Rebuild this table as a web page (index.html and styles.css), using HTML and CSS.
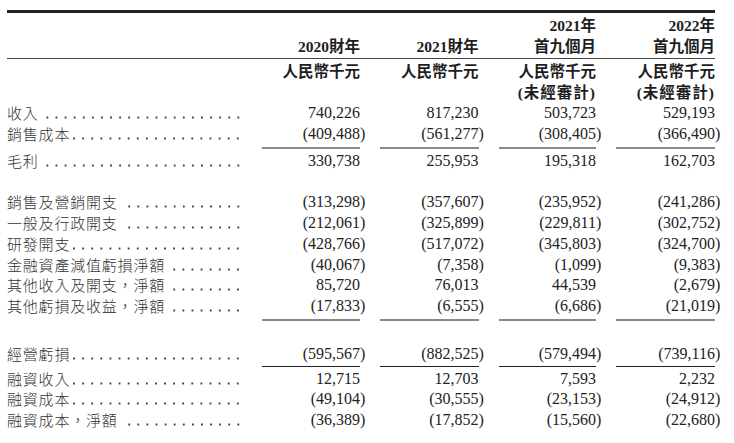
FILE: index.html
```html
<!DOCTYPE html>
<html lang="zh-Hant">
<head>
<meta charset="utf-8">
<title>財務資料</title>
<link rel="stylesheet" href="styles.css">
</head>
<body>
<div class="sheet">
  <div class="hdr hdr1">
    <div></div>
    <div class="hc">2020財年</div>
    <div class="hc">2021財年</div>
    <div class="hc">2021年<br>首九個月</div>
    <div class="hc">2022年<br>首九個月</div>
  </div>
  <div class="hdr hdr2">
    <div></div>
    <div class="hc">人民幣千元</div>
    <div class="hc">人民幣千元</div>
    <div class="hc">人民幣千元<br><span class="pr">(未經審計)</span></div>
    <div class="hc">人民幣千元<br><span class="pr">(未經審計)</span></div>
  </div>

  <div class="row">
    <div class="lab"><span class="t">收入</span><span class="d"></span></div>
    <div class="c"><span class="v">740,226</span></div>
    <div class="c"><span class="v">817,230</span></div>
    <div class="c"><span class="v">503,723</span></div>
    <div class="c"><span class="v">529,193</span></div>
  </div>
  <div class="row">
    <div class="lab"><span class="t">銷售成本</span><span class="d"></span></div>
    <div class="c u"><span class="v n">(409,488)</span></div>
    <div class="c u"><span class="v n">(561,277)</span></div>
    <div class="c u"><span class="v n">(308,405)</span></div>
    <div class="c u"><span class="v n">(366,490)</span></div>
  </div>
  <div class="row">
    <div class="lab"><span class="t">毛利</span><span class="d"></span></div>
    <div class="c"><span class="v">330,738</span></div>
    <div class="c"><span class="v">255,953</span></div>
    <div class="c"><span class="v">195,318</span></div>
    <div class="c"><span class="v">162,703</span></div>
  </div>
  <div class="gap"></div>
  <div class="row">
    <div class="lab"><span class="t">銷售及營銷開支</span><span class="d"></span></div>
    <div class="c"><span class="v n">(313,298)</span></div>
    <div class="c"><span class="v n">(357,607)</span></div>
    <div class="c"><span class="v n">(235,952)</span></div>
    <div class="c"><span class="v n">(241,286)</span></div>
  </div>
  <div class="row">
    <div class="lab"><span class="t">一般及行政開支</span><span class="d"></span></div>
    <div class="c"><span class="v n">(212,061)</span></div>
    <div class="c"><span class="v n">(325,899)</span></div>
    <div class="c"><span class="v n">(229,811)</span></div>
    <div class="c"><span class="v n">(302,752)</span></div>
  </div>
  <div class="row">
    <div class="lab"><span class="t">研發開支</span><span class="d"></span></div>
    <div class="c"><span class="v n">(428,766)</span></div>
    <div class="c"><span class="v n">(517,072)</span></div>
    <div class="c"><span class="v n">(345,803)</span></div>
    <div class="c"><span class="v n">(324,700)</span></div>
  </div>
  <div class="row">
    <div class="lab"><span class="t">金融資產減值虧損淨額</span><span class="d"></span></div>
    <div class="c"><span class="v n">(40,067)</span></div>
    <div class="c"><span class="v n">(7,358)</span></div>
    <div class="c"><span class="v n">(1,099)</span></div>
    <div class="c"><span class="v n">(9,383)</span></div>
  </div>
  <div class="row">
    <div class="lab"><span class="t">其他收入及開支，淨額</span><span class="d"></span></div>
    <div class="c"><span class="v">85,720</span></div>
    <div class="c"><span class="v">76,013</span></div>
    <div class="c"><span class="v">44,539</span></div>
    <div class="c"><span class="v n">(2,679)</span></div>
  </div>
  <div class="row">
    <div class="lab"><span class="t">其他虧損及收益，淨額</span><span class="d"></span></div>
    <div class="c u"><span class="v n">(17,833)</span></div>
    <div class="c u"><span class="v n">(6,555)</span></div>
    <div class="c u"><span class="v n">(6,686)</span></div>
    <div class="c u"><span class="v n">(21,019)</span></div>
  </div>
  <div class="gap"></div>
  <div class="row">
    <div class="lab"><span class="t">經營虧損</span><span class="d"></span></div>
    <div class="c u2"><span class="v n">(595,567)</span></div>
    <div class="c u2"><span class="v n">(882,525)</span></div>
    <div class="c u2"><span class="v n">(579,494)</span></div>
    <div class="c u2"><span class="v n">(739,116)</span></div>
  </div>
  <div class="row">
    <div class="lab"><span class="t">融資收入</span><span class="d"></span></div>
    <div class="c"><span class="v">12,715</span></div>
    <div class="c"><span class="v">12,703</span></div>
    <div class="c"><span class="v">7,593</span></div>
    <div class="c"><span class="v">2,232</span></div>
  </div>
  <div class="row">
    <div class="lab"><span class="t">融資成本</span><span class="d"></span></div>
    <div class="c"><span class="v n">(49,104)</span></div>
    <div class="c"><span class="v n">(30,555)</span></div>
    <div class="c"><span class="v n">(23,153)</span></div>
    <div class="c"><span class="v n">(24,912)</span></div>
  </div>
  <div class="row">
    <div class="lab"><span class="t">融資成本，淨額</span><span class="d"></span></div>
    <div class="c"><span class="v n">(36,389)</span></div>
    <div class="c"><span class="v n">(17,852)</span></div>
    <div class="c"><span class="v n">(15,560)</span></div>
    <div class="c"><span class="v n">(22,680)</span></div>
  </div>
</div>
</body>
</html>
```

FILE: styles.css
```css
html, body {
  margin: 0;
  padding: 0;
  background: #ffffff;
}

body {
  color: #222222;
  font-family: "Liberation Serif", "Noto Sans CJK TC", serif;
}

.sheet {
  margin: 10px 0 0 7px;
  width: 708px;
  border-top: 3px solid #222222;
}

.hdr,
.row {
  display: grid;
  grid-template-columns: 245px 118px 118.5px 117.5px 109px;
}

.hdr {
  font-family: "Liberation Serif", "Noto Sans CJK TC", serif;
  font-weight: 700;
  font-size: 15.5px;
  line-height: 20.5px;
  color: #1e1e1e;
}

.hdr1 {
  padding-top: 3px;
  padding-bottom: 1px;
  border-bottom: 1px solid #444444;
  align-items: end;
}

.hdr2 {
  padding-top: 3px;
  align-items: start;
}

.hc {
  margin: 0 10px;
  text-align: right;
  white-space: nowrap;
}

.hc:last-child {
  margin-right: 0;
}

.pr {
  letter-spacing: 1px;
}

.row {
  align-items: start;
  font-family: "Liberation Serif", serif;
  font-size: 16px;
  line-height: 20.8px;
}

.lab {
  display: flex;
  padding-right: 9.5px;
  font-family: "Noto Sans CJK TC", sans-serif;
  font-weight: 300;
  font-size: 15px;
  letter-spacing: 0.8px;
  color: #333333;
}

.lab .t {
  white-space: nowrap;
}

.lab .d {
  flex: 1;
  margin-left: 3px;
  background-image: radial-gradient(circle at center, #3a3a3a 0, #3a3a3a 0.85px, rgba(0, 0, 0, 0) 1.3px);
  background-size: 9.1px 3px;
  background-repeat: repeat-x;
  background-position: right 0 top 13px;
}

.c {
  margin: 0 10px;
  text-align: right;
  white-space: nowrap;
}

.c:last-child {
  margin-right: 0;
}

.v {
  display: block;
}

.n {
  margin-right: -5.33px;
}

.u {
  padding-bottom: 2px;
  border-bottom: 2px solid #8a8a8a;
  margin-bottom: 2px;
}

.u2 {
  padding-bottom: 1px;
  border-bottom: 1px solid #222222;
  margin-bottom: 2px;
}

.gap {
  height: 20.8px;
}
```
